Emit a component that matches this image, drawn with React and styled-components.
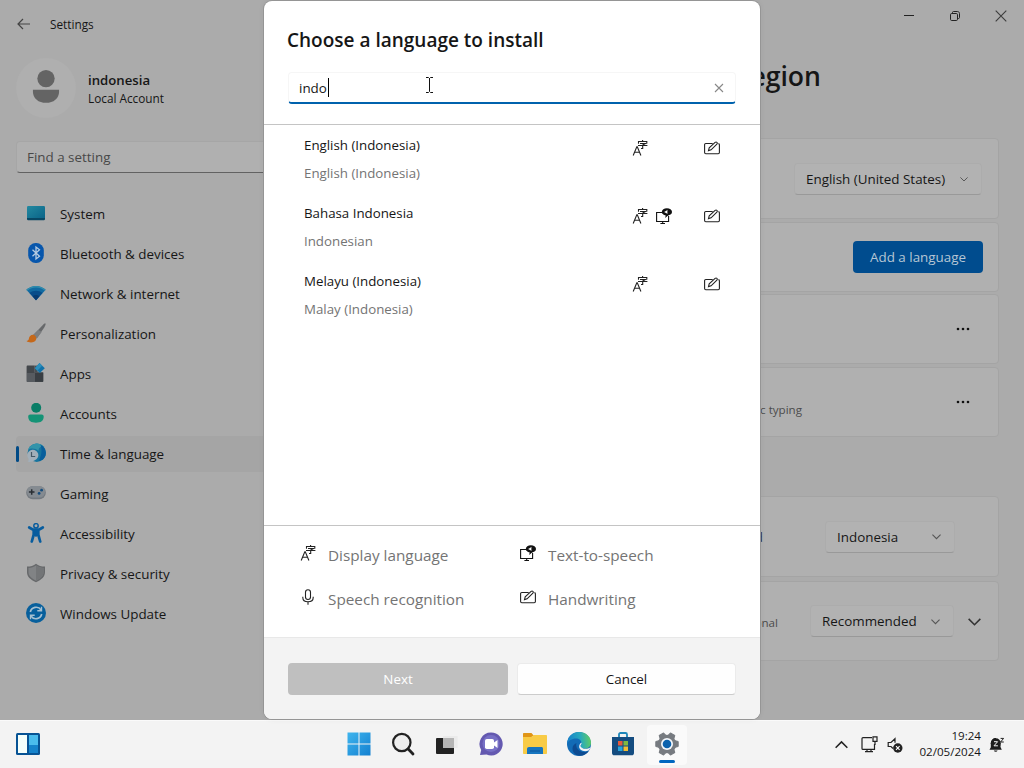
import styled, { createGlobalStyle, css } from 'styled-components';

const GlobalStyle = createGlobalStyle`
  * { box-sizing: border-box; }
  body {
    margin: 0;
    overflow: hidden;
    font-family: 'Open Sans', 'Noto Sans', sans-serif;
    font-size: 13.4px;
    color: #161616;
  }
`;

const Desktop = styled.div`
  position: relative;
  display: flex;
  flex-direction: column;
  width: 1024px;
  height: 768px;
  background: #f3f3f3;
`;

/* settings window */
const Window = styled.div`
  height: 720px;
  overflow: hidden;
  background: #ababab;
`;
const TitleBar = styled.div`
  display: flex;
  align-items: flex-start;
  height: 48px;
`;
const BackButton = styled.div`
  display: flex;
  align-items: center;
  justify-content: center;
  width: 48px;
  height: 48px;
`;
const AppName = styled.div`
  flex: 1;
  padding-left: 2px;
  font-size: 11.8px;
  line-height: 49px;
`;
const WindowButton = styled.div`
  display: flex;
  align-items: center;
  justify-content: center;
  width: 46px;
  height: 32px;
`;
const Body = styled.div`
  display: flex;
`;

const Sidebar = styled.div`
  width: 280px;
  padding: 10px 0 0 16px;
`;
const Profile = styled.div`
  display: flex;
  align-items: center;
  height: 60px;
  gap: 12px;
`;
const Avatar = styled.div`
  display: flex;
  align-items: center;
  justify-content: center;
  width: 60px;
  height: 60px;
  border-radius: 50%;
  background: #afafaf;

  svg { margin-top: -3px; }
`;
const ProfileName = styled.div`
  padding-top: 1px;
  font-size: 13.2px;
  font-weight: 600;
  line-height: 19px;
`;
const ProfileType = styled.div`
  font-size: 11.8px;
  line-height: 16px;
`;
const FindBox = styled.div`
  height: 32px;
  margin-top: 23px;
  padding-left: 10px;
  border: 1px solid #a6a6a6;
  border-bottom-color: #626262;
  border-radius: 4px;
  background: #b0b0b0;
  color: #484848;
  line-height: 31px;
`;
const NavList = styled.div`
  display: flex;
  flex-direction: column;
  gap: 4px;
  margin-top: 23px;
`;
const NavItem = styled.div`
  display: flex;
  align-items: center;
  height: 36px;
  border-radius: 4px;
  background: ${(p) => (p.$active ? '#a5a5a5' : 'transparent')};

  &::before {
    content: '';
    width: 3px;
    height: 16px;
    border-radius: 2px;
    background: ${(p) => (p.$active ? '#004a86' : 'transparent')};
  }
`;
const NavIcon = styled.div`
  display: flex;
  margin: -2px 14px 0 7px;
`;

/* right part */
const Main = styled.div`
  width: 719px;
`;
const Heading = styled.div`
  width: 541px;
  height: 90px;
  padding-top: 7px;
  font-size: 26.6px;
  font-weight: 600;
  line-height: 42px;
  text-align: right;
`;
const Card = styled.div`
  display: flex;
  align-items: center;
  justify-content: flex-end;
  height: ${(p) => p.$h}px;
  margin-bottom: ${(p) => p.$gap || 3}px;
  padding-right: ${(p) => p.$pad}px;
  border: 1px solid #a4a4a4;
  border-radius: 4px;
  background: #b0b0b0;
`;
const CardText = styled.div`
  flex: 1;
  padding-top: ${(p) => p.$top || 0}px;
  font-size: ${(p) => p.$size || 11.6}px;
  color: ${(p) => p.$color || '#4c4c4c'};
`;
const CardTextEnd = styled.div`
  width: ${(p) => p.$w}px;
  text-align: right;
`;
const Combo = styled.div`
  display: flex;
  align-items: center;
  justify-content: space-between;
  width: ${(p) => p.$w}px;
  height: 32px;
  margin-right: ${(p) => p.$mr || 0}px;
  padding: 0 13px 0 11px;
  border: 1px solid #acacac;
  border-bottom-color: #999;
  border-radius: 4px;
  background: #b2b2b2;
`;
const AddButton = styled.div`
  width: 130px;
  height: 32px;
  border-radius: 4px;
  background: #004c8e;
  color: #b6c6d4;
  line-height: 32px;
  text-align: center;
`;

/* dialog */
const Dialog = styled.div`
  position: absolute;
  top: 1px;
  left: 264px;
  display: flex;
  flex-direction: column;
  width: 496px;
  height: 718px;
  border-radius: 8px;
  background: #fff;
  box-shadow: 0 0 0 1px #959595, 0 0 6px rgba(0, 0, 0, 0.06);
  overflow: hidden;
`;
const DialogHeader = styled.div`
  height: 124px;
  padding: 24px 24px 0;
  border-bottom: 1px solid #c4c4c4;
`;
const DialogTitle = styled.div`
  margin-left: -1px;
  font-size: 19px;
  font-weight: 600;
  line-height: 30px;
`;
const SearchField = styled.div`
  position: relative;
  display: flex;
  align-items: center;
  height: 32px;
  margin-top: 17px;
  padding: 0 11px 0 10px;
  border: 1px solid #f6f6f6;
  border-bottom: 2px solid #0062ad;
  border-radius: 4px;
`;
const Caret = styled.div`
  width: 1px;
  height: 19px;
  margin-left: 1px;
  background: #000;
`;
const ClearButton = styled.div`
  display: flex;
  margin-left: auto;
`;
const MousePointer = styled.div`
  position: absolute;
  top: 3px;
  left: 136px;
  display: flex;
`;
const LanguageList = styled.div`
  height: 400px;
  padding-top: 2px;
`;
const LanguageRow = styled.div`
  display: grid;
  grid-template-columns: 328px 24px 48px 16px;
  height: 68px;
  padding: 8px 0 0 40px;
`;
const LanguageName = styled.div`
  font-size: 13.3px;
  line-height: 20px;
`;
const LanguageLocal = styled.div`
  margin-top: 8px;
  color: #747474;
  font-size: 13.3px;
  line-height: 20px;
`;
const RowIcon = styled.div`
  padding-top: 5px;
  line-height: 0;
`;
const Legend = styled.div`
  display: grid;
  grid-template-columns: 220px 220px;
  grid-auto-rows: 44px;
  height: 112px;
  padding: 7px 0 0 36px;
  border-top: 1px solid #c4c4c4;
`;
const LegendItem = styled.div`
  display: flex;
  align-items: center;
  gap: 12px;
  color: #747474;
  font-size: 15.3px;

  svg { margin-top: -5px; }
`;
const DialogFooter = styled.div`
  display: flex;
  flex: 1;
  align-items: flex-start;
  gap: 9px;
  padding: 25px 24px 0;
  border-top: 1px solid #e8e8e8;
  background: #f3f3f3;
`;
const DialogButton = styled.div`
  width: ${(p) => (p.$disabled ? 220 : 219)}px;
  height: 32px;
  border-radius: 4px;
  line-height: 32px;
  text-align: center;
  ${(p) =>
    p.$disabled
      ? css`
          background: #bfbfbf;
          color: #fff;
        `
      : css`
          border: 1px solid #ebebeb;
          border-bottom-color: #ccc;
          background: #fefefe;
          line-height: 30px;
        `}
`;

/* taskbar */
const Taskbar = styled.div`
  display: flex;
  align-items: center;
  height: 48px;
  border-top: 1px solid #fafafa;
`;
const TaskLeft = styled.div`
  display: flex;
  width: 336px;
  padding: 0 0 2px 16px;
`;
const TaskCell = styled.div`
  display: flex;
  flex-direction: column;
  align-items: center;
  justify-content: center;
  width: 44px;
  height: 48px;
  padding: 0 0 1px 1px;
`;
const ActiveCell = styled.div`
  display: flex;
  flex-direction: column;
  align-items: center;
  width: 40px;
  height: 40px;
  margin: 0 1px 0 3px;
  padding-top: 7px;
  border-radius: 4px;
  background: #fafafa;

  &::after {
    content: '';
    width: 16px;
    height: 3px;
    margin-top: 4px;
    border-radius: 2px;
    background: #0067c0;
  }
`;
const Tray = styled.div`
  display: flex;
  flex: 1;
  align-items: center;
  justify-content: flex-end;
  padding-right: 19px;
`;
const TrayIcon = styled.div`
  display: flex;
  margin-right: ${(p) => p.$mr || 0}px;
`;
const Clock = styled.div`
  width: 72px;
  margin: -1px 8px 0 0;
  font-size: 11.6px;
  line-height: 16px;
  text-align: right;
  white-space: nowrap;
`;

const Chevron = ({ w = 8, color = '#555', up }) => (
  <svg width={w} height={w} viewBox='0 0 10 10' fill='none' stroke={color} strokeWidth='1.2'>
    <path d={up ? 'M0.5 7.5 5 3l4.500 4.500' : 'M0.5 3 5 7.500 9.500 3'} />
  </svg>
);

const Dots = () => (
  <svg width='14' height='4' viewBox='0 0 14 4' fill='#111'>
    <circle cx='2' cy='2' r='1.3' />
    <circle cx='7' cy='2' r='1.3' />
    <circle cx='12' cy='2' r='1.3' />
  </svg>
);

const DisplayIcon = () => (
  <svg width='16' height='16' viewBox='0 0 16 16' fill='none' stroke='#222' strokeWidth='1.1'>
    <path d='M1.2 15.5 4.8 6.8h.5l3.6 8.7M2.6 12.3h5' />
    <path d='M6.5 3.7V1.5h8.3v2.2M10.6 0v1.500M8 3.500h5.400L10.700 5v3.500H9M6 5.500h9.400' />
  </svg>
);

const SpeechOutIcon = () => (
  <svg width='16' height='16' viewBox='0 0 16 16' fill='none' stroke='#111' strokeWidth='1.1'>
    <path d='M6 4.500H.600v9h12V8M4.400 15.500H9M6.700 13.500v2' />
    <ellipse cx='10.900' cy='3.900' rx='5.100' ry='3.700' fill='#111' stroke='none' />
    <path d='M9.800 6.500 9.200 10l3.400-3z' fill='#111' stroke='none' />
    <path d='M8.700 3.200h1.100l1.600-1.400v4.300L9.800 4.700H8.700z' fill='#fff' stroke='none' />
  </svg>
);

const HandwritingIcon = () => (
  <svg width='16' height='16' viewBox='0 0 16 16' fill='none' stroke='#222' strokeWidth='1.1'>
    <path d='M8.700 3.500H1.800c-.7 0-1.200.5-1.200 1.200v7.800c0 .7.5 1.200 1.200 1.200h12.400c.7 0 1.200-.5 1.200-1.200V4.700c0-.6-.4-1-1-1.100' />
    <path d='m4.500 10.600.7-2.700 5.900-5.500c1.300-1.100 3 .6 1.800 1.800L7.100 9.800z' />
  </svg>
);

const MicIcon = () => (
  <svg width='16' height='16' viewBox='0 0 16 16' fill='none' stroke='#222' strokeWidth='1.1'>
    <rect x='5.500' y='.7' width='5' height='9.800' rx='2.500' />
    <path d='M2.800 7.700v.7c0 2.600 2.100 4.300 5.200 4.300s5.200-1.700 5.200-4.300v-.7M8 12.700v3' />
  </svg>
);

const navIcons = {
  system: (
    <>
      <defs>
        <linearGradient id='scr' x2='1' y2='1'>
          <stop stopColor='#2389a0' />
          <stop offset='1' stopColor='#096287' />
        </linearGradient>
      </defs>
      <rect x='1' y='3' width='18' height='13' rx='1.2' fill='url(#scr)' />
      <path d='M1 15h18v1a1.200 1.200 0 0 1-1.200 1.200H2.200A1.200 1.200 0 0 1 1 16z' fill='#084764' />
    </>
  ),
  bluetooth: (
    <>
      <rect x='2.200' y='0' width='15.600' height='20' rx='7.500' fill='#0756ac' />
      <path d='m6.500 6.800 7 6.400L10 16V4l3.500 2.800-7 6.400' fill='none' stroke='#b4cbe2' strokeWidth='1.3' />
    </>
  ),
  network: (
    <>
      <path d='M.3 6.800C5.800 1.700 14.200 1.700 19.700 6.800L10 17.200z' fill='#126aa1' />
      <path d='M3.500 10C7.200 6.900 12.800 6.900 16.500 10L10 17.200z' fill='#084d8a' />
      <path d='M6.600 13.200c2-1.500 4.800-1.500 6.800 0L10 17.200z' fill='#083b70' />
      <path d='M.3 6.800C5.800 1.700 14.200 1.700 19.700 6.800l-1 1C13.500 3.500 6.500 3.500 1.300 7.800z' fill='#308dad' />
    </>
  ),
  personal: (
    <>
      <path d='M19.400.5c.6.5-.1 2.200-1 3.700L10.700 15.600 7.200 12 16.900 1.900c1-.9 2-1.900 2.500-1.400z' fill='#67696b' />
      <path d='m12.400 7 3.300 2-5 6.600L7.200 12z' fill='#7c7e80' />
      <path d='M8.500 12.200c-2.900-1.200-5.400 1-5.700 3.800-.2 1.100-.9 1.900-2.300 2 2.400 2.200 8.300 2 9.500-1.200.5-1.500.2-3.600-1.500-4.600z' fill='#c5681a' />
    </>
  ),
  apps: (
    <>
      <path d='M1.700 2.600h7v7h8.700v8.300c0 .6-.5 1.100-1.100 1.100H1.700C1 19 .6 18.500.6 17.900V3.700c0-.6.4-1.100 1.100-1.100z' fill='#43474b' />
      <path d='M1 10h8v9H1z' fill='#575b60' />
      <path d='M9 9.500h8v9H9z' fill='#393e43' />
      <path d='M8.700 2.600h3v7h-3z' fill='#4a4f53' />
      <path d='m13.500 0 5.300 5.300-5 4.700-5-4.700z' fill='#1172a9' />
      <path d='m8.800 5.300 4.700-5.300 2.700 2.700-4.900 5z' fill='#2b8ebb' />
    </>
  ),
  accounts: (
    <>
      <circle cx='10.200' cy='4.800' r='5' fill='#087d66' />
      <path d='M2.200 13.600c0-1.200.9-2 2-2h11.500c1.100 0 2 .8 2 2 0 4.400-3 6.200-7.700 6.200s-7.800-1.800-7.800-6.200z' fill='#149376' />
    </>
  ),
  time: (
    <>
      <circle cx='10.800' cy='9.800' r='9.200' fill='#17749e' />
      <path d='M2 7C5-.5 13.500-1 17.500 3.300c-3.500 0-5 2.200-5 4.700C9 5 5 5 2 7z' fill='#3394aa' />
      <path d='M14.500 1.500c6.500 4 7 12 1.800 15.200L12.500 18c3-5 4-11 2-16.500z' fill='#085e9c' />
      <path d='M1.500 18.600c1.500-1 1.200-2 .900-3.100a5.500 5.500 0 1 1 6 2c-2 1.200-4.600 2-6.900 1.100z' fill='#a2afb9' />
      <path d='M5.500 9v4.500h3.700' fill='none' stroke='#465966' strokeWidth='1.200' />
    </>
  ),
  gaming: (
    <>
      <rect x='.2' y='3.200' width='19.600' height='13' rx='6.400' fill='#747a80' />
      <rect x='1' y='3' width='18' height='11.500' rx='5.500' fill='#858b91' />
      <path d='M5.700 6.200v5.600M2.900 9h5.600' stroke='#292e33' strokeWidth='1.500' />
      <circle cx='13.100' cy='10.400' r='1.400' fill='#164d7d' />
      <circle cx='15.600' cy='7.200' r='1.400' fill='#164d7d' />
    </>
  ),
  access: (
    <>
      <circle cx='10' cy='2.800' r='2.200' fill='none' stroke='#075c9e' strokeWidth='1.500' />
      <path d='M3.200 4.500 7 6.700h6l3.800-2.200M7.700 6.700v5L5.800 18.500M12.300 6.700v5l1.900 6.800M10 7v5.500' fill='none' stroke='#075c9e' strokeWidth='2.700' strokeLinecap='round' />
    </>
  ),
  privacy: (
    <>
      <path d='M10 .8c2.500 2 5.300 2.800 9 2.800v5.700c0 4.300-3.300 7.500-9 10-5.700-2.500-9-5.700-9-10V3.600c3.700 0 6.500-.8 9-2.800z' fill='#67696b' />
      <path d='M10 2.600c2.300 1.600 4.500 2.300 7.500 2.400v4.300c0 3.400-2.600 6-7.500 8.400-4.900-2.400-7.500-5-7.500-8.400V5c3-.1 5.200-.8 7.500-2.400z' fill='#818385' />
      <path d='M10 2.600c2.300 1.600 4.500 2.300 7.500 2.400v4.300c0 3.400-2.600 6-7.500 8.400z' fill='#737577' />
    </>
  ),
  update: (
    <>
      <circle cx='10' cy='10' r='10' fill='#075f9c' />
      <path d='M4.300 9a6 6 0 0 1 10.800-2.100M15.700 11a6 6 0 0 1-10.800 2.100' fill='none' stroke='#a5bfd0' strokeWidth='1.700' />
      <path d='M15.500 3.800v4h-4.200M4.500 16.200v-4h4.200' fill='none' stroke='#a5bfd0' strokeWidth='1.400' />
    </>
  ),
};

const navItems = [
  { icon: 'system', label: 'System' },
  { icon: 'bluetooth', label: 'Bluetooth & devices' },
  { icon: 'network', label: 'Network & internet' },
  { icon: 'personal', label: 'Personalization' },
  { icon: 'apps', label: 'Apps' },
  { icon: 'accounts', label: 'Accounts' },
  { icon: 'time', label: 'Time & language', active: true },
  { icon: 'gaming', label: 'Gaming' },
  { icon: 'access', label: 'Accessibility' },
  { icon: 'privacy', label: 'Privacy & security' },
  { icon: 'update', label: 'Windows Update' },
];

const languages = [
  { name: 'English (Indonesia)', local: 'English (Indonesia)' },
  { name: 'Bahasa Indonesia', local: 'Indonesian', speech: true },
  { name: 'Melayu (Indonesia)', local: 'Malay (Indonesia)' },
];

const SettingsWindow = () => (
  <Window>
    <TitleBar>
      <BackButton>
        <svg width='14' height='12' viewBox='0 0 14 12' fill='none' stroke='#444' strokeWidth='1.2'>
          <path d='M13 6H1M6 1 1 6l5 5' />
        </svg>
      </BackButton>
      <AppName>Settings</AppName>
      <WindowButton>
        <svg width='10' height='10' stroke='#222'><path d='M0 4.500h10' /></svg>
      </WindowButton>
      <WindowButton>
        <svg width='10' height='10' fill='none' stroke='#222'>
          <rect x='.5' y='2.500' width='7' height='7' rx='1.200' />
          <path d='M2.500 2v-.500c0-.6.4-1 1-1h4c1.100 0 2 .9 2 2v4c0 .6-.4 1-1 1H8' />
        </svg>
      </WindowButton>
      <WindowButton>
        <svg width='12' height='12' stroke='#3c3c3c' strokeWidth='1.100'><path d='m.7.7 10.600 10.600M11.300.7.7 11.300' /></svg>
      </WindowButton>
    </TitleBar>
    <Body>
      <Sidebar>
        <Profile>
          <Avatar>
            <svg width='28' height='35' viewBox='0 0 30 36' fill='#646464'>
              <circle cx='15' cy='9.500' r='9.300' />
              <path d='M1 21.500h28v2c0 7-6 12-14 12S1 30.500 1 23.500z' />
            </svg>
          </Avatar>
          <div>
            <ProfileName>indonesia</ProfileName>
            <ProfileType>Local Account</ProfileType>
          </div>
        </Profile>
        <FindBox>Find a setting</FindBox>
        <NavList>
          {navItems.map((item) => (
            <NavItem key={item.label} $active={item.active}>
              <NavIcon>
                <svg width='20' height='20' viewBox='0 0 20 20'>{navIcons[item.icon]}</svg>
              </NavIcon>
              {item.label}
            </NavItem>
          ))}
        </NavList>
      </Sidebar>
      <Main>
        <Heading>Language &amp; region</Heading>
        <Card $h={81} $pad={16}>
          <Combo $w={188}>English (United States) <Chevron /></Combo>
        </Card>
        <Card $h={70} $pad={15} $gap={2}>
          <AddButton>Add a language</AddButton>
        </Card>
        <Card $h={70} $pad={28}>
          <Dots />
        </Card>
        <Card $h={70} $pad={28} $gap={59}>
          <CardText $top={15}><CardTextEnd $w={521}>basic typing</CardTextEnd></CardText>
          <Dots />
        </Card>
        <Card $h={81} $pad={43} $gap={4}>
          <CardText $size={13.4} $color='#333'><CardTextEnd $w={482}>world</CardTextEnd></CardText>
          <Combo $w={130}>Indonesia <Chevron w={9} /></Combo>
        </Card>
        <Card $h={80} $pad={17}>
          <CardText $top={3}><CardTextEnd $w={497}>regional</CardTextEnd></CardText>
          <Combo $w={144} $mr={14}>Recommended <Chevron w={9} /></Combo>
          <Chevron w={13} color='#333' />
        </Card>
      </Main>
    </Body>
  </Window>
);

const LanguageDialog = () => (
  <Dialog>
    <DialogHeader>
      <DialogTitle>Choose a language to install</DialogTitle>
      <SearchField>
        indo
        <Caret />
        <ClearButton>
          <svg width='10' height='10' stroke='#888' strokeWidth='1.100'><path d='m1 1 8 8M9 1 1 9' /></svg>
        </ClearButton>
        <MousePointer>
          <svg width='9' height='18' fill='none' stroke='#111'><path d='M1 1.500h2.500l1 1 1-1H8M4.500 2v13M1 16.500h2.500l1-1 1 1H8' /></svg>
        </MousePointer>
      </SearchField>
    </DialogHeader>
    <LanguageList>
      {languages.map((lang) => (
        <LanguageRow key={lang.name}>
          <div>
            <LanguageName>{lang.name}</LanguageName>
            <LanguageLocal>{lang.local}</LanguageLocal>
          </div>
          <RowIcon><DisplayIcon /></RowIcon>
          <RowIcon>{lang.speech && <SpeechOutIcon />}</RowIcon>
          <RowIcon><HandwritingIcon /></RowIcon>
        </LanguageRow>
      ))}
    </LanguageList>
    <Legend>
      <LegendItem><DisplayIcon /> Display language</LegendItem>
      <LegendItem><SpeechOutIcon /> Text-to-speech</LegendItem>
      <LegendItem><MicIcon /> Speech recognition</LegendItem>
      <LegendItem><HandwritingIcon /> Handwriting</LegendItem>
    </Legend>
    <DialogFooter>
      <DialogButton $disabled>Next</DialogButton>
      <DialogButton>Cancel</DialogButton>
    </DialogFooter>
  </Dialog>
);

const Gear = () => {
  const teeth = [0, 60, 120, 180, 240, 300];
  return (
    <svg width='24' height='24' viewBox='0 0 24 24'>
      <g fill='#777b80'>
        <circle cx='12' cy='12' r='9.200' />
        {teeth.map((a) => (
          <path key={a} d='M8.700 4 9.500.8h5L15.300 4z' transform={`rotate(${a + 30} 12 12)`} stroke='#777b80' strokeLinejoin='round' />
        ))}
      </g>
      <circle cx='12' cy='12' r='6' fill='#f4f7fa' />
      <circle cx='12' cy='12' r='4.300' fill='#0b62ad' />
    </svg>
  );
};

const App = () => {
  return (
    <>
      <GlobalStyle />
      <Desktop>
        <SettingsWindow />
        <Taskbar>
          <TaskLeft>
            <svg width='24' height='22' viewBox='0 0 24 22'>
              <rect width='24' height='22' rx='1.500' fill='#075394' />
              <rect x='2' y='2' width='9' height='18' fill='#f5fffb' />
              <rect x='13' y='2' width='9' height='10' fill='#4abced' />
              <rect x='13' y='12' width='9' height='8' fill='#1583cb' />
            </svg>
          </TaskLeft>
          <TaskCell>
            <svg width='24' height='24' viewBox='0 0 24 24'>
              <defs>
                <linearGradient id='win' x2='1' y2='1'>
                  <stop stopColor='#3fb5ee' />
                  <stop offset='1' stopColor='#1380d0' />
                </linearGradient>
              </defs>
              <path d='M.5.500h11v11H.5zM12.500.500h11v11h-11zM.5 12.500h11v11H.5zM12.500 12.500h11v11h-11z' fill='url(#win)' />
            </svg>
          </TaskCell>
          <TaskCell>
            <svg width='24' height='24' viewBox='0 0 24 24' fill='none' stroke='#222'>
              <circle cx='10.800' cy='10.500' r='8.700' fill='#eee' strokeWidth='2.200' />
              <path d='m17.200 17 4.800 5' strokeWidth='2.800' strokeLinecap='round' />
            </svg>
          </TaskCell>
          <TaskCell>
            <svg width='24' height='24' viewBox='0 0 24 24'>
              <rect x='1' y='6' width='18' height='16' rx='1' fill='#222' />
              <path d='M8 4h14.500v12H8z' fill='#dedede' opacity='.4' />
              <path d='M8 6h11v10H8z' fill='#b5b5b5' />
            </svg>
          </TaskCell>
          <TaskCell>
            <svg width='24' height='24' viewBox='0 0 24 24'>
              <path d='M12 .500a11.500 11.500 0 1 1-4.500 22L1 23l1.200-5A11.500 11.500 0 0 1 12 .500z' fill='#6459b0' />
              <circle cx='12' cy='11.500' r='8.500' fill='#7770c5' />
              <rect x='6' y='7' width='9' height='10' rx='1.800' fill='#fff' />
              <path d='m15 10.500 3.500-2.500v8L15 13.500z' fill='#fff' />
            </svg>
          </TaskCell>
          <TaskCell>
            <svg width='26' height='24' viewBox='0 0 26 24'>
              <path d='M2 1h7.500l2.500 3h-2v3H1V2c0-.6.4-1 1-1z' fill='#e09517' />
              <path d='M1 5h8l3-2h12c.6 0 1 .4 1 1v17c0 .6-.4 1-1 1H2c-.6 0-1-.4-1-1z' fill='#f8cb46' />
              <path d='M7 15h12.500c.8 0 1.500.7 1.500 1.500V22H5v-5c0-1.200.8-2 2-2z' fill='#1675bf' />
              <path d='M8 18.500h10v1H8z' fill='#0b559a' />
            </svg>
          </TaskCell>
          <TaskCell>
            <svg width='24' height='24' viewBox='0 0 24 24'>
              <defs>
                <linearGradient id='edge' x1='0' y1='.4' x2='1' y2='.3'>
                  <stop stopColor='#1680cb' />
                  <stop offset='.55' stopColor='#27a9bd' />
                  <stop offset='1' stopColor='#62cd61' />
                </linearGradient>
              </defs>
              <circle cx='12' cy='12' r='12' fill='#126bb6' />
              <path d='M0 11.500C.8 4.500 5.500 0 12 0c7 0 12 5 12 10.500 0 4-3 6-6 6-3.500 0-4.500-1.300-4.500-2.300 0-.7 1-1 1-3 0-2.800-2.500-4.700-5.500-4.700-4.500 0-7.500 2.500-9 5z' fill='url(#edge)' />
              <path d='M9.500 11c-1.500 4.500 2.500 9.500 9 9 1.500-.1 2.600-.7 3.500-1.300-5 7.600-16.500 6.300-16.500-2.200 0-2.500 1.500-4.500 4-5.500z' fill='#0d4b91' />
              <path d='M13.500 14.200c.8 2.500 6 3.800 10 1-.5 1.500-1.300 2.800-2.500 3.600-5 1.200-9.500-1-8.800-5 .5-2.500 2.300-3 2.300-3 .6 1.500-1.300 1.900-1 3.400z' fill='#f3f3f3' />
            </svg>
          </TaskCell>
          <TaskCell>
            <svg width='24' height='24' viewBox='0 0 24 24'>
              <path d='M8 5V2.500C8 1.700 8.700 1 9.500 1h5c.8 0 1.500.7 1.500 1.500V5' fill='none' stroke='#1c86ba' strokeWidth='1.800' />
              <path d='M1 5h22v16c0 1.400-1 2.300-2.300 2.300H3.300C2 23.300 1 22.400 1 21z' fill='#144c80' />
              <path d='M7 9h4.500v4.500H7z' fill='#e65a3c' />
              <path d='M12.500 9H17v4.500h-4.500z' fill='#80b83f' />
              <path d='M7 14.500h4.500V19H7z' fill='#26a3dc' />
              <path d='M12.500 14.500H17V19h-4.500z' fill='#f2bd32' />
            </svg>
          </TaskCell>
          <ActiveCell>
            <Gear />
          </ActiveCell>
          <Tray>
            <TrayIcon $mr={13}><Chevron w={13} color='#222' up /></TrayIcon>
            <TrayIcon $mr={9}>
              <svg width='17' height='17' viewBox='0 0 17 17' fill='none' stroke='#222' strokeWidth='1.200'>
                <path d='M11 1.600H2c-.6 0-1 .4-1 1v9.800c0 .6.400 1 1 1h11.500V8M4 15.700h8M6 13.500v2M10 13.500v2' />
                <path d='M12 .8h4v4.500h-4zM14 5.500V9' />
              </svg>
            </TrayIcon>
            <TrayIcon $mr={6}>
              <svg width='16' height='16' viewBox='0 0 16 16' fill='none' stroke='#222' strokeWidth='1.200'>
                <path d='M6 11.500 4 9.500H1.200V5.500H4l4-3.800v4' />
                <circle cx='10.800' cy='11' r='4.700' fill='#222' stroke='none' />
                <path d='m9 9.200 3.600 3.600m0-3.600L9 12.800' stroke='#fff' strokeWidth='1.100' />
              </svg>
            </TrayIcon>
            <Clock>
              19:24
              <br />
              02/05/2024
            </Clock>
            <TrayIcon>
              <svg width='16' height='16' viewBox='0 0 16 16'>
                <path d='M7 1a5 5 0 0 0-5.200 5v4.200L.5 12.700h12.300L11.500 10V7.500H7V1zM4.800 13.400h3.800a2 2 0 0 1-3.800 0z' fill='#1c1c1c' />
                <circle cx='6.800' cy='6.200' r='5' fill='#1c1c1c' />
                <path d='M5 4.700h3.600L5 8.800h3.900' fill='none' stroke='#f3f3f3' />
                <path d='M11.600 1.400h3l-3 3.600h3.200' fill='none' stroke='#222' />
              </svg>
            </TrayIcon>
          </Tray>
        </Taskbar>
        <LanguageDialog />
      </Desktop>
    </>
  );
};

export default App;
